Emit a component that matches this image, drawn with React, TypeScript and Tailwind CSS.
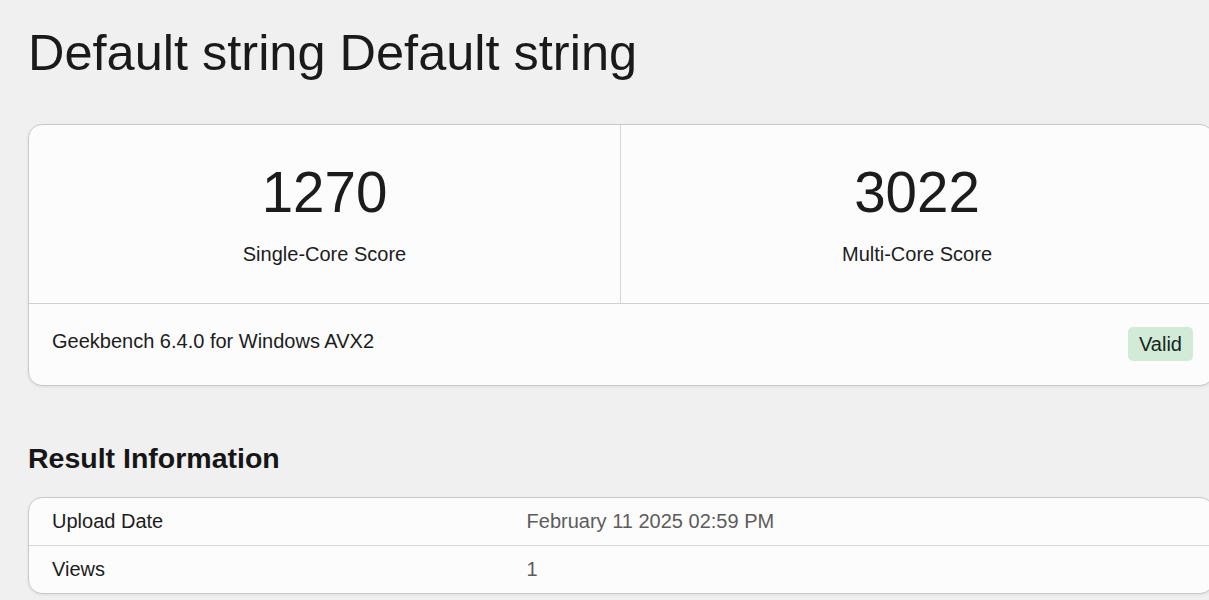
import React from "react";

export default function App() {
  return (
    <div
      className="w-[1209px] h-[600px] overflow-hidden bg-[#f0f0f0] text-[#1c1c1c]"
      style={{ fontFamily: '"Liberation Sans", Arial, sans-serif' }}
    >
      <div className="w-[1186px] ml-[28px] pt-[23px]">
        <h1 className="text-[50.5px] leading-[60px] font-normal m-0 text-[#1a1a1a]">
          Default string Default string
        </h1>

        <div className="mt-[41px] rounded-[14px] border border-[#c9c9c9] bg-[#fcfcfc] shadow-[0_1px_3px_rgba(0,0,0,0.08)] overflow-hidden">
          <div className="grid grid-cols-2">
            <div className="flex flex-col items-center pt-[34px] pb-[34px] border-r border-[#d4d4d4]">
              <div className="text-[56.5px] leading-[67px]">1270</div>
              <div className="text-[20px] leading-[30px] mt-[13px]">Single-Core Score</div>
            </div>
            <div className="flex flex-col items-center pt-[34px] pb-[34px]">
              <div className="text-[56.5px] leading-[67px]">3022</div>
              <div className="text-[20px] leading-[30px] mt-[13px]">Multi-Core Score</div>
            </div>
          </div>
          <div className="flex justify-between items-start border-t border-[#d0d0d0] pl-[23px] pr-[20px] pt-[22px] pb-[24px]">
            <div className="text-[20px] leading-[30px]">Geekbench 6.4.0 for Windows AVX2</div>
            <div className="mt-[1px] rounded-[5px] bg-[#d2ebd9] px-[11px] py-[2px] text-[20px] leading-[30px] text-[#13261a]">
              Valid
            </div>
          </div>
        </div>

        <h2 className="mt-[55px] text-[28.5px] leading-[34px] font-bold text-[#161616]">
          Result Information
        </h2>

        <div className="mt-[22px] rounded-[14px] border border-[#c9c9c9] bg-[#fcfcfc] shadow-[0_1px_3px_rgba(0,0,0,0.08)] overflow-hidden">
          <div className="flex text-[20px] leading-[31px] border-b border-[#d6d6d6]">
            <div className="w-[40%] pl-[23px] py-[8px]">Upload Date</div>
            <div className="flex-1 pl-[24px] py-[8px] text-[#5c5c5c]">February 11 2025 02:59 PM</div>
          </div>
          <div className="flex text-[20px] leading-[31px]">
            <div className="w-[40%] pl-[23px] py-[8px]">Views</div>
            <div className="flex-1 pl-[24px] py-[8px] text-[#5c5c5c]">1</div>
          </div>
        </div>
      </div>
    </div>
  );
}
